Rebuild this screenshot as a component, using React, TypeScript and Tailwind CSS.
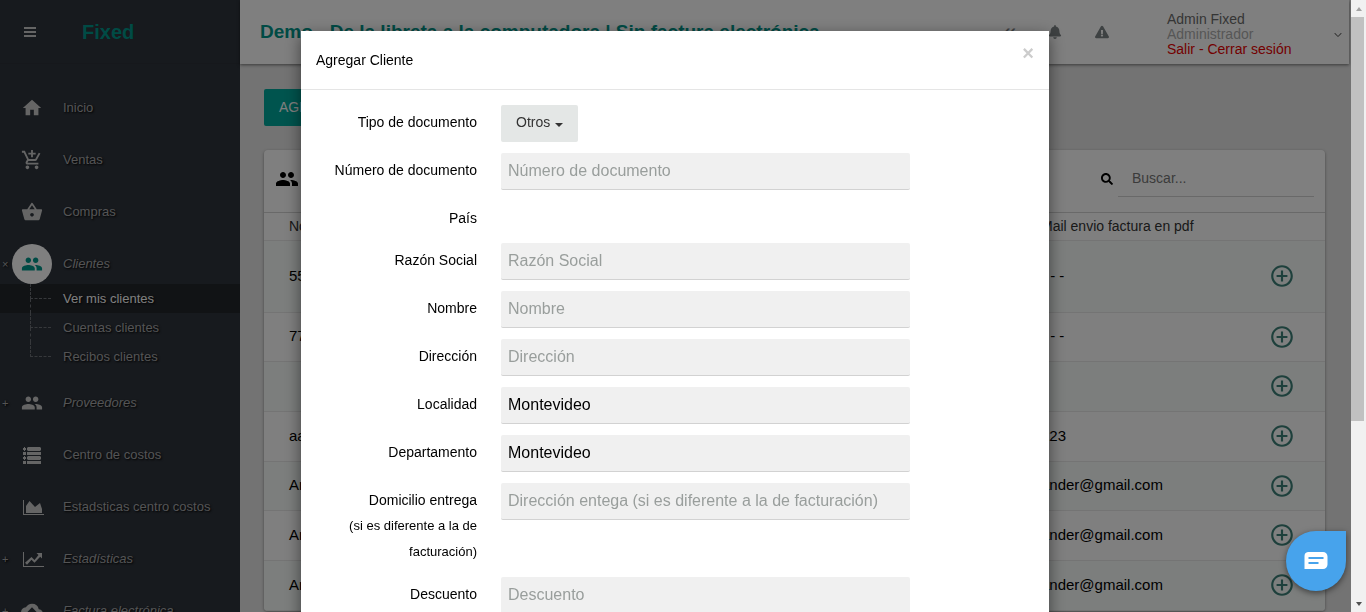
import React, { useState } from "react";
import { FaBell, FaExclamationTriangle, FaSearch } from "react-icons/fa";
import { GoChevronDown } from "react-icons/go";
import {
  MdAddCircleOutline,
  MdAddShoppingCart,
  MdBackup,
  MdHome,
  MdPeople,
  MdShoppingBasket,
} from "react-icons/md";

type IconProps = { className?: string };

function MenuIcon({ className }: IconProps) {
  return (
    <svg viewBox="0 0 12 10" fill="currentColor" className={className} aria-hidden="true">
      <path d="M0 0h12v2H0zM0 4h12v2H0zM0 8h12v2H0z" />
    </svg>
  );
}

function ListIcon({ className }: IconProps) {
  return (
    <svg viewBox="0 0 18 17" fill="currentColor" className={className} aria-hidden="true">
      <path d="M0 1h1V0h1v1h1v2H2v1H1V3H0zM0 5h3v3H0zM0 10h1V9h1v1h1v2H2v1H1v-1H0zM0 14h3v3H0z" />
      <path d="M5 0h12l1 1v2l-1 1H5L4 3V1zM4 5h14v3H4zM5 9h12l1 1v2l-1 1H5l-1-1v-2zM4 14h14v3H4z" />
    </svg>
  );
}

function AreaChartIcon({ className }: IconProps) {
  return (
    <svg viewBox="0 0 21 15" fill="currentColor" className={className} aria-hidden="true">
      <path d="M0 0h1v14h20v1H0zM3 13V6l3.500-5L12 7l5-4 2 6v4z" />
    </svg>
  );
}

function LineChartIcon({ className }: IconProps) {
  return (
    <svg viewBox="0 0 21 15" fill="currentColor" className={className} aria-hidden="true">
      <path d="M0 0h1v14h20v1H0zM13.500 1H19v5.500l-1.800-1.800-5.700 6-3-3-4.500 5-2-2L8.500 5l3 3 4-5z" />
    </svg>
  );
}

type Item = {
  label: string;
  icon: React.ComponentType<IconProps>;
  size: string;
  group?: boolean;
  children?: string[];
};

const items: Item[] = [
  { label: "Inicio", icon: MdHome, size: "size-[22px]" },
  { label: "Ventas", icon: MdAddShoppingCart, size: "size-[22px]" },
  { label: "Compras", icon: MdShoppingBasket, size: "size-[22px]" },
  {
    label: "Clientes",
    icon: MdPeople,
    size: "size-[22px]",
    group: true,
    children: ["Ver mis clientes", "Cuentas clientes", "Recibos clientes"],
  },
  { label: "Proveedores", icon: MdPeople, size: "size-[22px]", group: true },
  { label: "Centro de costos", icon: ListIcon, size: "h-[17px] w-[18px]" },
  { label: "Estadsticas centro costos", icon: AreaChartIcon, size: "ml-[3px] h-[15px] w-[21px]" },
  { label: "Estadísticas", icon: LineChartIcon, size: "ml-[3px] h-[15px] w-[21px]", group: true },
  { label: "Factura electrónica", icon: MdBackup, size: "size-[22px]", group: true },
];

function Sidebar() {
  return (
    <nav className="w-60 shrink-0 bg-[#2e343c] text-[13px] text-[#a8a9ab]">
      <div className="flex h-16 items-center border-b border-[#2c3138] pl-6">
        <button type="button" aria-label="Menú" className="text-[#cbcbcb]">
          <MenuIcon className="h-[10px] w-3" />
        </button>
        <a href="#inicio" className="ml-[46px] text-[20px] font-bold text-[#00968a]">
          Fixed
        </a>
      </div>
      <ul className="pt-[18px] [text-shadow:1px_1px_2px_black]">
        {items.map(({ label, icon: Icon, size, group, children }) => (
          <li key={label}>
            <a href="#menu" className="flex h-13 items-center">
              <span className="w-3 pl-0.5 text-[11px]">{group ? (children ? "×" : "+") : ""}</span>
              <span
                className={
                  children
                    ? "flex size-10 items-center justify-center rounded-full bg-white text-[#00968a]"
                    : "flex size-10 items-center justify-center text-[#cbcbcb]"
                }
              >
                <Icon className={size} />
              </span>
              <span className={group ? "ml-[11px] italic" : "ml-[11px]"}>{label}</span>
            </a>
            {children && (
              <ul className="-mt-1.5 mb-1.5">
                {children.map((child, i) => (
                  <li key={child} className={i === 0 ? "bg-[#22262b] text-white" : ""}>
                    <a href="#clientes" className="flex h-[29px] items-center">
                      <span className="ml-[30px] flex h-full w-[21px] flex-col">
                        <span className="h-[15px] border-b border-l border-dashed border-[#6d7176]" />
                        <span
                          className={
                            i < children.length - 1
                              ? "flex-1 border-l border-dashed border-[#6d7176]"
                              : "flex-1"
                          }
                        />
                      </span>
                      <span className="ml-3">{child}</span>
                    </a>
                  </li>
                ))}
              </ul>
            )}
          </li>
        ))}
      </ul>
    </nav>
  );
}

function Header() {
  return (
    <header className="flex h-16 items-center bg-white pr-[5px] pl-5 shadow-[0_1px_3px_rgba(0,0,0,0.5)]">
      <h1 className="flex-1 text-[19px] font-bold whitespace-nowrap text-[#00968a]">
        Demo - De la libreta a la computadora | Sin factura electrónica
      </h1>
      <div className="flex items-center text-[#7d8486]">
        <a href="#compartir" aria-label="Atajos" className="mr-8 text-[24px]">
          «
        </a>
        <button type="button" aria-label="Notificaciones" className="mr-[33px]">
          <FaBell className="size-[14px]" />
        </button>
        <button type="button" aria-label="Alertas">
          <FaExclamationTriangle className="size-[14px]" />
        </button>
      </div>
      <div className="ml-[58px] w-[165px] pt-1 text-[14px] leading-[15px] text-[#6b6b6b]">
        <p>Admin Fixed</p>
        <p className="text-[#adadad]">Administrador</p>
        <a href="#salir" className="text-[#e80000]">
          Salir - Cerrar sesión
        </a>
      </div>
      <button type="button" aria-label="Cuenta" className="pt-1.5">
        <GoChevronDown className="size-3 text-[#555]" />
      </button>
    </header>
  );
}

const rows = [
  ["55", "- - -"],
  ["77", "- - -"],
  ["", ""],
  ["aa", "123"],
  ["Ar", "ander@gmail.com"],
  ["Ar", "ander@gmail.com"],
  ["Ar", "ander@gmail.com"],
];

function Clients() {
  return (
    <section className="mt-6 overflow-hidden rounded-sm bg-white shadow-[0_1px_3px_rgba(0,0,0,0.4)]">
      <div className="flex h-[63px] items-center border-b border-[#d2d2d2] pr-[11px] pb-[5px] pl-[11px]">
        <MdPeople className="size-6 text-black" />
        <label className="ml-auto flex items-center gap-[5px]">
          <FaSearch className="size-3 text-black" />
          <input
            type="search"
            placeholder="Buscar..."
            className="h-9 w-49 border-b border-[#d2d2d2] px-3.5 text-[14px] placeholder:text-[#777]"
          />
        </label>
      </div>
      <table className="w-full table-fixed text-left text-[15px] text-black">
        <thead>
          <tr className="h-[27px] border-b border-[#e8e8e8] text-[14px] text-[#333]">
            <th className="pl-[25px] font-normal">Nombre</th>
            <th className="w-48 font-normal">Mail envio factura en pdf</th>
            <th className="w-23" />
          </tr>
        </thead>
        <tbody>
          {rows.map(([name, mail], i) => (
            <tr
              key={i}
              className="h-[50px] border-b border-[#e8e8e8] first:h-[72px] odd:bg-[#f8fdfb] nth-[3n+2]:h-[49px]"
            >
              <td className="pl-[25px]">{name}</td>
              <td>{mail}</td>
              <td>
                <button type="button" aria-label="Ver más" className="ml-9 block">
                  <MdAddCircleOutline className="size-[26px] text-[#3d8078]" />
                </button>
              </td>
            </tr>
          ))}
        </tbody>
      </table>
    </section>
  );
}

type Field = { label: string; note?: string; placeholder?: string; value?: string };

const fields: Field[] = [
  { label: "Razón Social", placeholder: "Razón Social" },
  { label: "Nombre", placeholder: "Nombre" },
  { label: "Dirección", placeholder: "Dirección" },
  { label: "Localidad", value: "Montevideo" },
  { label: "Departamento", value: "Montevideo" },
  {
    label: "Domicilio entrega",
    note: "(si es diferente a la de facturación)",
    placeholder: "Dirección entega (si es diferente a la de facturación)",
  },
  { label: "Descuento", placeholder: "Descuento" },
];

function FormRow({ label, note, placeholder, value }: Field) {
  return (
    <div className="flex items-start gap-6">
      <label htmlFor={label} className="w-44 shrink-0 pt-1 pb-px pl-4 text-right leading-[26px]">
        {label}
        {note && <span className="block text-[13px]">{note}</span>}
      </label>
      {(placeholder || value) && (
        <input
          id={label}
          type="text"
          placeholder={placeholder}
          defaultValue={value}
          className="h-[37px] w-[409px] rounded-xs border-b border-[#d2d2d2] bg-[#f0f0f0] px-[7px] text-[16px] text-black placeholder:text-[#999e9c]"
        />
      )}
    </div>
  );
}

function ClientDialog({ onClose }: { onClose: () => void }) {
  return (
    <div className="fixed inset-0 flex items-start justify-center overflow-hidden bg-black/50 pt-[31px] pr-4">
      <div
        role="dialog"
        aria-label="Agregar Cliente"
        className="w-[748px] bg-white pb-6 text-[14px] text-black shadow-[0_5px_15px_rgba(0,0,0,0.5)]"
      >
        <div className="flex h-[59px] items-start justify-between border-b border-[#e5e5e5] px-[15px]">
          <h2 className="text-[14px] leading-[58px]">Agregar Cliente</h2>
          <button
            type="button"
            aria-label="Cerrar"
            onClick={onClose}
            className="pt-3 text-[20px] leading-[21px] font-bold text-[#ccc]"
          >
            ×
          </button>
        </div>
        <form className="flex flex-col gap-[11px] pt-[15px]">
          <div className="flex items-start gap-6">
            <label htmlFor="tipo" className="w-44 pt-1 pb-px text-right leading-[26px]">
              Tipo de documento
            </label>
            <button
              id="tipo"
              type="button"
              className="flex h-[37px] items-center gap-[5px] rounded-xs bg-[#e4e7e6] px-[15px] pb-0.5 text-[#333]"
            >
              Otros
              <span className="mt-1 border-x-4 border-t-4 border-x-transparent border-t-[#333]" />
            </button>
          </div>
          <FormRow label="Número de documento" placeholder="Número de documento" />
          <FormRow label="País" />
          {fields.map((field) => (
            <FormRow key={field.label} {...field} />
          ))}
        </form>
      </div>
    </div>
  );
}

function ScrollBar() {
  return (
    <div className="fixed inset-y-0 right-0 flex w-[15px] flex-col bg-[#f1f1f1]" aria-hidden="true">
      <div className="flex h-[17px] items-center justify-center">
        <span className="border-x-[3px] border-b-4 border-x-transparent border-b-[#a3a3a3]" />
      </div>
      <div className="mr-0.5 h-[66%] bg-[#c1c1c1]" />
      <div className="mt-auto flex h-[17px] items-center justify-center">
        <span className="border-x-[3px] border-t-4 border-x-transparent border-t-[#505050]" />
      </div>
    </div>
  );
}

export default function App() {
  const [open, setOpen] = useState(true);
  return (
    <div className="flex h-screen overflow-hidden bg-[#e6e6e6] pr-[17px] font-['Liberation_Sans',Arial,sans-serif]">
      <Sidebar />
      <div className="min-w-0 flex-1">
        <Header />
        <main className="px-6 pt-[25px]">
          <button
            type="button"
            onClick={() => setOpen(true)}
            className="block h-[37px] rounded-xs bg-[#00a89c] px-[15px] text-[14px] text-white"
          >
            AGREGAR CLIENTE
          </button>
          <Clients />
        </main>
      </div>
      {open && <ClientDialog onClose={() => setOpen(false)} />}
      <button
        type="button"
        aria-label="Chat"
        className="fixed right-5 bottom-[21px] flex size-15 items-center justify-center rounded-full rounded-tr-md bg-[#47a3ec] shadow-[0_2px_6px_rgba(0,0,0,0.5)]"
      >
        <svg viewBox="0 0 24 18" className="h-[18px] w-6" aria-hidden="true">
          <path
            fill="white"
            d="M4 0h15a4.500 4.500 0 0 1 4.500 4.500v8A4.500 4.500 0 0 1 19 17H.500V4A4 4 0 0 1 4 0z"
          />
          <path stroke="#47a3ec" strokeWidth="2" d="M4.500 6h15M4.500 11h10" />
        </svg>
      </button>
      <ScrollBar />
    </div>
  );
}
